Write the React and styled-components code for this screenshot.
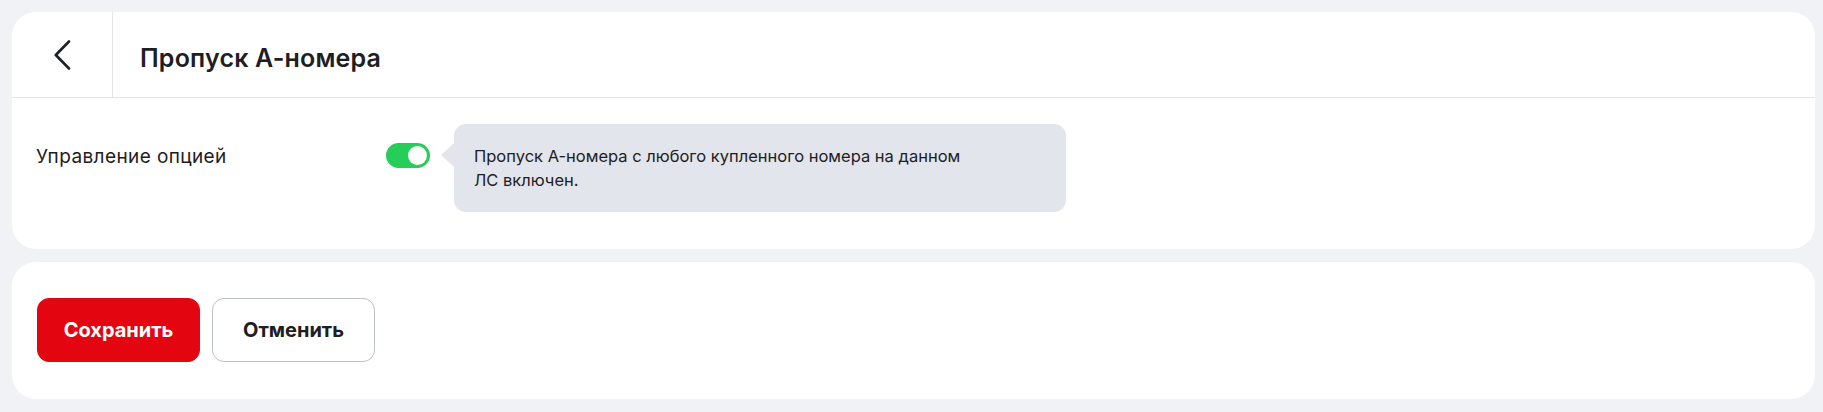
import { createGlobalStyle, styled } from "styled-components";

const colors = {
    page: '#f0f2f5',
    card: '#ffffff',
    text: '#1d2023',
    line: '#e2e5eb',
    red: '#e30611',
    green: '#26cd58',
    hint: '#e2e5eb',
    border: '#bbc1c7',
};

const GlobalStyle = createGlobalStyle`
    * { box-sizing: border-box; }

    body {
        background-color: ${ colors.page };
        color: ${ colors.text };
        font-family: Inter, 'Noto Sans', sans-serif;
        margin: 0;
    }
`;

const Page = styled.main`
    display: flex;
    flex-direction: column;
    gap: 13px;
    padding: 12px 8px 12px 12px;
`;

const Card = styled.section`
    background-color: ${ colors.card };
    border-radius: 24px;
`;

const Header = styled.header`
    align-items: center;
    border-bottom: 1px solid ${ colors.line };
    display: flex;
    height: 86px;
`;

const BackButton = styled.button`
    align-items: center;
    align-self: stretch;
    background: none;
    border: none;
    border-right: 1px solid ${ colors.line };
    color: ${ colors.text };
    cursor: pointer;
    display: flex;
    justify-content: center;
    padding: 0;
    width: 101px;
`;

const Title = styled.h1`
    font-size: 25px;
    font-weight: 600;
    letter-spacing: 0.2px;
    margin: 6px 0 0 27px;
`;

const Body = styled.div`
    align-items: flex-start;
    display: flex;
    padding: 26px 24px 37px;
`;

const Label = styled.span`
    font-size: 19px;
    letter-spacing: 0.4px;
    line-height: 24px;
    margin-top: 21px;
    width: 350px;
`;

const Switch = styled.button`
    background-color: ${ ({ $on }) => $on ? colors.green : colors.border };
    border: none;
    border-radius: 13px;
    cursor: pointer;
    flex-shrink: 0;
    height: 25px;
    margin-top: 19px;
    padding: 0;
    position: relative;
    width: 44px;

    &::after {
        background-color: #fff;
        border-radius: 50%;
        content: '';
        height: 19px;
        left: ${ ({ $on }) => $on ? '22px' : '3px' };
        position: absolute;
        top: 3px;
        width: 19px;
    }
`;

const Hint = styled.div`
    background-color: ${ colors.hint };
    border-radius: 12px;
    font-size: 16.5px;
    line-height: 24px;
    margin-left: 24px;
    padding: 20px 20px;
    position: relative;
    width: 612px;

    p {
        margin: 0;
        max-width: 500px;
    }

    &::before {
        border-bottom: 12px solid transparent;
        border-right: 13px solid ${ colors.hint };
        border-top: 12px solid transparent;
        content: '';
        left: -13px;
        position: absolute;
        top: 19px;
    }
`;

const Actions = styled.div`
    display: flex;
    gap: 12px;
    padding: 36px 25px 37px;
`;

const Button = styled.button`
    background-color: ${ ({ $primary }) => $primary ? colors.red : '#fff' };
    border: 1px solid ${ ({ $primary }) => $primary ? colors.red : colors.border };
    border-radius: 12px;
    color: ${ ({ $primary }) => $primary ? '#fff' : colors.text };
    cursor: pointer;
    font-family: Inter, 'Noto Sans', sans-serif;
    font-size: 20px;
    font-weight: 700;
    height: 64px;
    min-width: 163px;
    padding: 0 24px;
`;

function App() {
    return (
        <>
            <GlobalStyle />
            <Page>
                <Card>
                    <Header>
                        <BackButton aria-label="Назад">
                            <svg width="17" height="30" viewBox="0 0 17 30" fill="none">
                                <path d="M15 1.5 L1.8 15 L15 28.5" stroke="currentColor" strokeWidth="2.6" strokeLinecap="round" strokeLinejoin="round" />
                            </svg>
                        </BackButton>
                        <Title>Пропуск А-номера</Title>
                    </Header>
                    <Body>
                        <Label>Управление опцией</Label>
                        <Switch $on aria-label="Управление опцией" />
                        <Hint>
                            <p>Пропуск А-номера с любого купленного номера на данном ЛС включен.</p>
                        </Hint>
                    </Body>
                </Card>

                <Card>
                    <Actions>
                        <Button $primary>Сохранить</Button>
                        <Button>Отменить</Button>
                    </Actions>
                </Card>
            </Page>
        </>
    );
}

export default App;
